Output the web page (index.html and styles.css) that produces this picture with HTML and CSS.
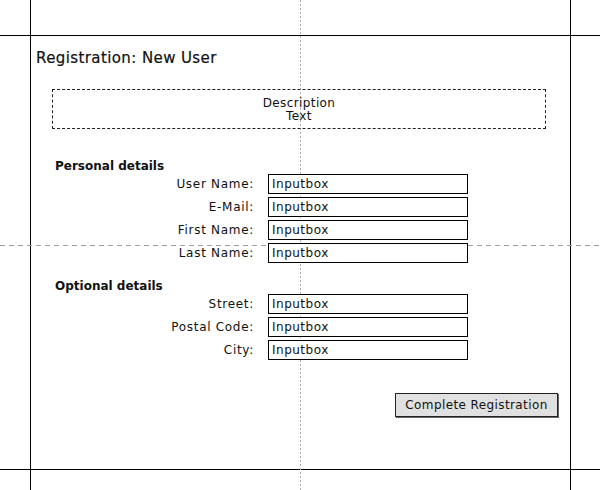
FILE: index.html
```html
<!DOCTYPE html>
<html lang="en">
<head>
    <meta charset="UTF-8">
    <title>Registration: New User</title>
    <link rel="stylesheet" href="styles.css">
</head>
<body>
    <!-- sketch guides -->
    <div class="guide guide-v" style="left: 30px"></div>
    <div class="guide guide-v" style="left: 570px"></div>
    <div class="guide guide-h" style="top: 35px"></div>
    <div class="guide guide-h" style="top: 469px"></div>
    <div class="guide guide-center-v"></div>
    <div class="guide guide-center-h"></div>

    <main class="form">
        <h1 class="title">Registration: New User</h1>

        <div class="description">Description<br>Text</div>

        <section class="group">
            <h2 class="group-title">Personal details</h2>
            <div class="row">
                <label class="label">User Name:</label>
                <input class="field" type="text" value="Inputbox">
            </div>
            <div class="row">
                <label class="label">E-Mail:</label>
                <input class="field" type="text" value="Inputbox">
            </div>
            <div class="row">
                <label class="label">First Name:</label>
                <input class="field" type="text" value="Inputbox">
            </div>
            <div class="row">
                <label class="label">Last Name:</label>
                <input class="field" type="text" value="Inputbox">
            </div>
        </section>

        <section class="group group-optional">
            <h2 class="group-title">Optional details</h2>
            <div class="row">
                <label class="label">Street:</label>
                <input class="field" type="text" value="Inputbox">
            </div>
            <div class="row">
                <label class="label">Postal Code:</label>
                <input class="field" type="text" value="Inputbox">
            </div>
            <div class="row">
                <label class="label">City:</label>
                <input class="field" type="text" value="Inputbox">
            </div>
        </section>

        <div class="actions">
            <button class="submit-btn" type="button">Complete Registration</button>
        </div>
    </main>
</body>
</html>
```

FILE: styles.css
```css
body {
    margin: 0;
    width: 600px;
    height: 490px;
    position: relative;
    overflow: hidden;
    background: #fff;
    font-family: 'DejaVu Sans', Verdana, sans-serif;
    color: #111;
}

/* Guides */
.guide {
    position: absolute;
}

.guide-v {
    top: 0;
    width: 1px;
    height: 490px;
    background: #000;
}

.guide-h {
    left: 0;
    width: 600px;
    height: 1px;
    background: #000;
}

.guide-center-v {
    left: 300px;
    top: 0;
    width: 1px;
    height: 490px;
    background: repeating-linear-gradient(to bottom, #b0b0b0 0 2px, transparent 2px 4px);
}

.guide-center-h {
    left: 0;
    top: 245px;
    width: 600px;
    height: 1px;
    background: repeating-linear-gradient(to right, #a0a0a0 0 5px, transparent 5px 9px);
}

/* Form */
.form {
    position: relative;
    width: 522px;
    margin-left: 36px;
    padding-top: 50px;
}

.title {
    margin: 0;
    font-size: 15px;
    font-weight: normal;
    line-height: 17px;
    letter-spacing: 0.4px;
    -webkit-text-stroke: 0.2px #111;
}

.description {
    margin: 22px 0 0 16px;
    width: 492px;
    padding: 7px 0 5px;
    border: 1px dashed #222;
    text-align: center;
    font-size: 12px;
    line-height: 13px;
    letter-spacing: 0.4px;
}

.group {
    margin-top: 30px;
    display: flex;
    flex-direction: column;
    gap: 3px;
}

.group-optional {
    margin-top: 16px;
}

.group-title {
    margin: 0 0 -2px 19px;
    font-size: 12px;
    font-weight: bold;
    line-height: 14px;
}

.row {
    display: grid;
    grid-template-columns: 218px 200px;
    column-gap: 14px;
    align-items: center;
}

.label {
    text-align: right;
    font-size: 12px;
    letter-spacing: 0.7px;
}

.field {
    box-sizing: border-box;
    width: 200px;
    height: 20px;
    margin: 0;
    padding: 0 3px;
    border: 1px solid #000;
    background: #fff;
    font-family: 'DejaVu Sans', Verdana, sans-serif;
    font-size: 12px;
    letter-spacing: 0.5px;
    color: #111;
    outline: none;
}

.actions {
    display: flex;
    justify-content: flex-end;
    margin-top: 33px;
}

.submit-btn {
    width: 163px;
    height: 24px;
    padding: 0;
    border: 1px solid #222;
    background: #e0e0e0;
    box-shadow: 1px 1px 0 #666;
    font-family: 'DejaVu Sans', Verdana, sans-serif;
    font-size: 12px;
    letter-spacing: 0.4px;
    color: #111;
}
```
